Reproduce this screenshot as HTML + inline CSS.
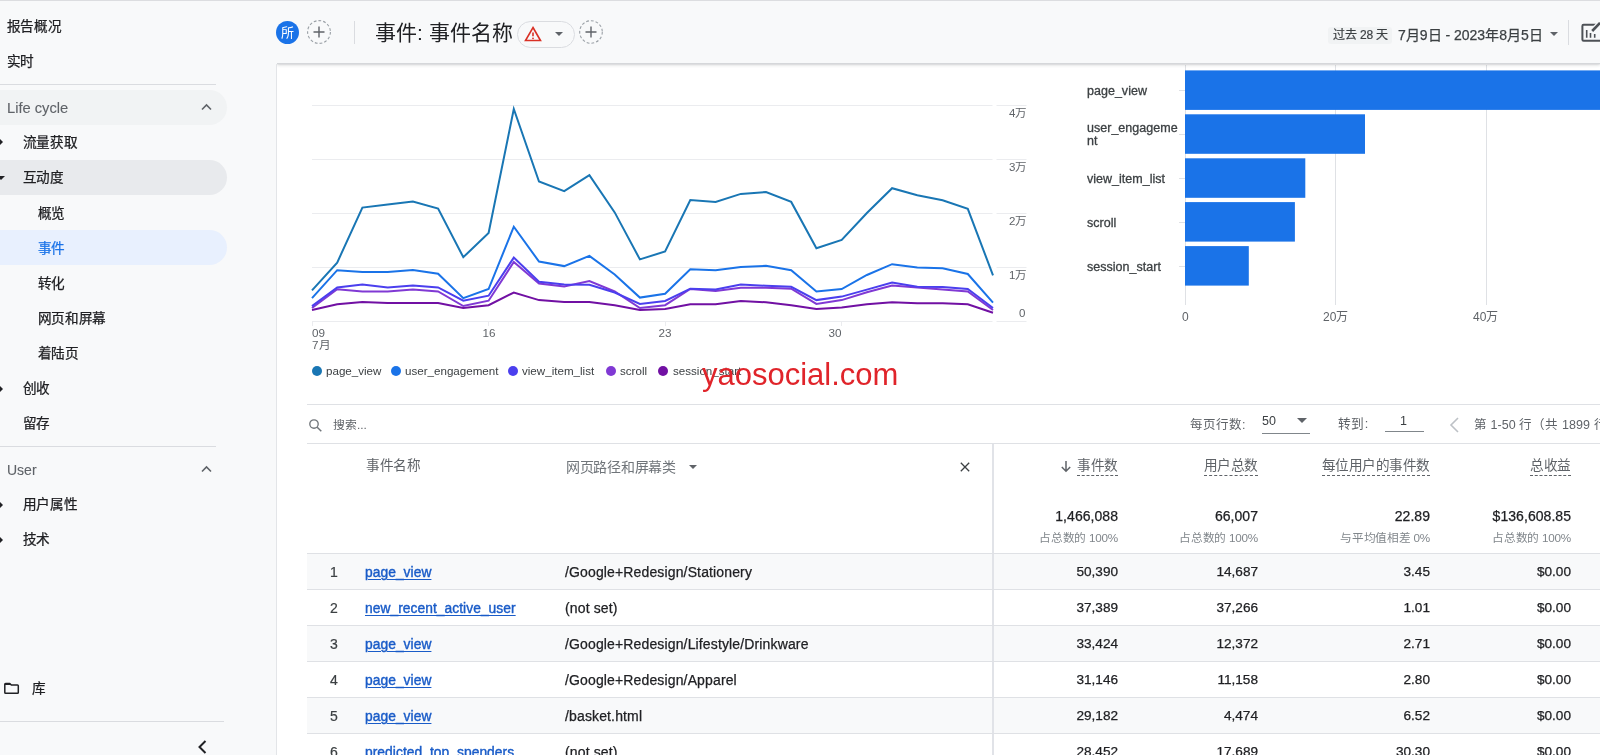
<!DOCTYPE html>
<html lang="zh-CN"><head><meta charset="utf-8">
<style>
*{box-sizing:border-box;margin:0;padding:0}
html,body{width:1600px;height:755px;overflow:hidden;background:#f8f9fa;font-family:"Liberation Sans",sans-serif;color:#202124}
.abs{position:absolute}
#root{position:relative;width:1600px;height:755px;overflow:hidden;background:transparent;will-change:transform}
#topline{left:0;top:0;width:1600px;height:1px;background:#dcdde0}
#side{left:0;top:0;width:276px;height:755px;background:#f8f9fa}
#sideb{left:276px;top:64px;width:1px;height:691px;background:#e3e5e8}
.nav{position:absolute;left:0;height:35px;width:227px;border-radius:0 18px 18px 0;font-size:13.6px;font-weight:500;letter-spacing:-.3px;line-height:35px;color:#202124;white-space:nowrap}
.nav span{position:absolute;top:0;margin-left:-.5px;-webkit-text-stroke:.25px currentColor}
.sep{position:absolute;left:0;height:1px;background:#dadce0}
.tri{position:absolute;left:-4px;width:0;height:0}
#hdr{left:277px;top:2px;width:1323px;height:62px;background:#f8f9fa;border-bottom:1px solid #d5d7da;box-shadow:0 1px 3px rgba(60,64,67,.22);clip-path:inset(0 0 -8px 0)}
#card{left:277px;top:65px;width:1323px;height:690px;background:#fff}
.circ{position:absolute;width:23.4px;height:23.4px;border-radius:50%}
.t{position:absolute;white-space:nowrap;line-height:14px}
.r{text-align:right}
.bl{font-size:12.5px;color:#3c4043;line-height:14px;letter-spacing:.02px;-webkit-text-stroke:.3px #3c4043}
.row{position:absolute;left:307px;width:1293px;height:36px;border-top:1px solid #dfe1e5}
.row.odd{background:#f8f9fa}
.cell{position:absolute;top:0;line-height:36px;font-size:14px;color:#202124;white-space:nowrap;letter-spacing:.14px;-webkit-text-stroke:.25px #202124}
.cell.r,.cell.n{font-size:13.6px;letter-spacing:0}
.cell.n{-webkit-text-stroke:.2px #3c4043;color:#3c4043;font-size:14px}
a.lk{color:#1a5cc8;text-decoration:underline;text-underline-offset:1.5px;text-decoration-thickness:1px;font-size:13.8px;letter-spacing:.05px;-webkit-text-stroke:.4px #1a5cc8}
.hd{font-size:13.6px;color:#5f6368;letter-spacing:-.45px;font-weight:500}
.dash{border-bottom:1px dashed #5f6368;padding-bottom:2px}
.sub{font-size:11.7px;color:#80868b;letter-spacing:-.25px}
.tot{font-size:14px;color:#202124;letter-spacing:.05px;-webkit-text-stroke:.25px #202124}
</style></head><body><div id="root">

<!-- SIDEBAR -->
<div id="side" class="abs">
 <div class="nav" style="top:9px"><span style="left:7px">报告概况</span></div>
 <div class="nav" style="top:44px"><span style="left:7px">实时</span></div>
 <div class="sep" style="top:84px;width:216px"></div>
 <div class="nav" style="top:90px;background:#f1f3f4;color:#5f6368"><span style="left:7.5px;top:1px;font-size:14.7px;letter-spacing:0;-webkit-text-stroke:.1px">Life cycle</span>
  <svg class="abs" style="left:200px;top:12px" width="13" height="10" viewBox="0 0 13 10"><path d="M2 7.5 L6.5 3 L11 7.5" fill="none" stroke="#5f6368" stroke-width="1.6"/></svg></div>
 <div class="nav" style="top:125px"><span style="left:23px">流量获取</span></div>
 <div class="nav" style="top:160px;background:#e8eaed"><span style="left:23px">互动度</span></div>
 <div class="nav" style="top:195px"><span style="left:38px;top:1px">概览</span></div>
 <div class="nav" style="top:230px;background:#e8f0fe;color:#1a73e8"><span style="left:38px;top:1px">事件</span></div>
 <div class="nav" style="top:265px"><span style="left:38px;top:1px">转化</span></div>
 <div class="nav" style="top:300px"><span style="left:38px;top:1px">网页和屏幕</span></div>
 <div class="nav" style="top:335px"><span style="left:38px;top:1px">着陆页</span></div>
 <div class="nav" style="top:371px"><span style="left:23px">创收</span></div>
 <div class="nav" style="top:406px"><span style="left:23px">留存</span></div>
 <div class="sep" style="top:446px;width:216px"></div>
 <div class="nav" style="top:451px;color:#5f6368"><span style="left:7.5px;top:2px;font-size:14px;letter-spacing:0;-webkit-text-stroke:.1px">User</span>
  <svg class="abs" style="left:200px;top:13px" width="13" height="10" viewBox="0 0 13 10"><path d="M2 7.5 L6.5 3 L11 7.5" fill="none" stroke="#5f6368" stroke-width="1.6"/></svg></div>
 <div class="nav" style="top:487px"><span style="left:23px">用户属性</span></div>
 <div class="nav" style="top:522px"><span style="left:23px">技术</span></div>
 <!-- arrows -->
 <div class="tri" style="top:139px;left:0;border-left:3.6px solid #202124;border-top:3px solid transparent;border-bottom:3px solid transparent"></div>
 <div class="tri" style="top:176px;left:-3px;border-top:4px solid #202124;border-left:4px solid transparent;border-right:4px solid transparent"></div>
 <div class="tri" style="top:386px;left:0;border-left:3.6px solid #202124;border-top:3px solid transparent;border-bottom:3px solid transparent"></div>
 <div class="tri" style="top:501.5px;left:0;border-left:3.6px solid #202124;border-top:3px solid transparent;border-bottom:3px solid transparent"></div>
 <div class="tri" style="top:536.5px;left:0;border-left:3.6px solid #202124;border-top:3px solid transparent;border-bottom:3px solid transparent"></div>
 <!-- library -->
 <svg class="abs" style="left:4px;top:681px" width="17" height="14" viewBox="0 0 17 14"><path d="M.8 3.2 Q.8 2.45 1.6 2.45 H5.8 L7.3 3.95 H13.5 Q14.3 3.95 14.3 4.75 V11.45 Q14.3 12.25 13.5 12.25 H1.6 Q.8 12.25 .8 11.45 Z" fill="none" stroke="#202124" stroke-width="1.5" stroke-linejoin="round"/><path d="M.8 2.45 H5.8 L7.3 3.95 H.8 Z" fill="#202124"/></svg>
 <div class="nav" style="top:671px"><span style="left:32px">库</span></div>
 <div class="sep" style="top:721px;width:224px"></div>
 <svg class="abs" style="left:196px;top:739px" width="12" height="16" viewBox="0 0 12 16"><path d="M9.5 2 L3.5 8 L9.5 14" fill="none" stroke="#202124" stroke-width="2"/></svg>
</div>

<div id="sideb" class="abs"></div>
<!-- CARD -->
<div id="card" class="abs"></div>

<!-- LINE CHART -->
<svg class="abs" style="left:0;top:0" width="1600" height="755" viewBox="0 0 1600 755">
 <g stroke="#ebecef" stroke-width="1">
  <line x1="312" x2="992.5" y1="105.5" y2="105.5"/><line x1="996.5" x2="1026.5" y1="105.5" y2="105.5"/><line x1="312" x2="992.5" y1="159.5" y2="159.5"/><line x1="996.5" x2="1026.5" y1="159.5" y2="159.5"/>
  <line x1="312" x2="992.5" y1="213.5" y2="213.5"/><line x1="996.5" x2="1026.5" y1="213.5" y2="213.5"/><line x1="312" x2="992.5" y1="267.5" y2="267.5"/><line x1="996.5" x2="1026.5" y1="267.5" y2="267.5"/>
  <line x1="312" x2="992.5" y1="321.5" y2="321.5"/><line x1="996.5" x2="1026.5" y1="321.5" y2="321.5"/>
  <line x1="312.5" x2="312.5" y1="321" y2="326"/><line x1="488.5" x2="488.5" y1="321" y2="326"/><line x1="665.5" x2="665.5" y1="321" y2="326"/><line x1="841.5" x2="841.5" y1="321" y2="326"/>
 </g>
 <!-- bar chart grid -->
 <g stroke="#dfe1e5" stroke-width="1">
  <line x1="1185.5" x2="1185.5" y1="65" y2="305"/><line x1="1335.5" x2="1335.5" y1="65" y2="305"/><line x1="1486.5" x2="1486.5" y1="65" y2="305"/>
  <line x1="1179" x2="1185" y1="90.5" y2="90.5"/><line x1="1179" x2="1185" y1="134.5" y2="134.5"/><line x1="1179" x2="1185" y1="178.5" y2="178.5"/><line x1="1179" x2="1185" y1="222.5" y2="222.5"/><line x1="1179" x2="1185" y1="266.5" y2="266.5"/>
 </g>
 <g fill="#1a73e8">
  <rect x="1185" y="70.4" width="415" height="39.5"/>
  <rect x="1185" y="114.3" width="180" height="39.5"/>
  <rect x="1185" y="158.3" width="120.3" height="39.5"/>
  <rect x="1185" y="202.1" width="109.9" height="39.5"/>
  <rect x="1185" y="246.1" width="63.8" height="39.5"/>
 </g>
 <polyline points="312.0,310.0 337.2,304.2 362.4,302.0 387.7,303.0 412.9,303.0 438.1,303.0 463.3,308.0 488.6,305.2 513.8,292.5 539.0,300.1 564.2,302.0 589.4,302.0 614.7,305.2 639.9,310.0 665.1,309.0 690.3,304.2 715.6,304.2 740.8,301.0 766.0,302.3 791.2,305.2 816.4,309.0 841.7,307.4 866.9,304.2 892.1,302.3 917.3,303.3 942.6,303.3 967.8,304.2 993.0,312.8" fill="none" stroke="#7110a3" stroke-width="2" stroke-linejoin="miter"/><polyline points="312.0,308.0 337.2,289.3 362.4,291.5 387.7,291.5 412.9,289.6 438.1,291.5 463.3,306.0 488.6,300.7 513.8,262.0 539.0,283.6 564.2,286.4 589.4,281.0 614.7,291.5 639.9,308.0 665.1,305.2 690.3,289.0 715.6,290.9 740.8,287.7 766.0,287.7 791.2,288.7 816.4,303.9 841.7,300.1 866.9,292.2 892.1,285.5 917.3,287.4 942.6,289.6 967.8,291.5 993.0,310.0" fill="none" stroke="#8039d4" stroke-width="2" stroke-linejoin="miter"/><polyline points="312.0,306.1 337.2,287.4 362.4,284.5 387.7,287.4 412.9,285.5 438.1,287.4 463.3,300.7 488.6,295.7 513.8,257.6 539.0,281.7 564.2,284.5 589.4,284.8 614.7,292.5 639.9,303.9 665.1,301.0 690.3,288.7 715.6,289.6 740.8,284.5 766.0,285.8 791.2,286.8 816.4,300.1 841.7,296.6 866.9,289.6 892.1,282.6 917.3,286.8 942.6,287.1 967.8,289.0 993.0,308.0" fill="none" stroke="#4b3fee" stroke-width="2" stroke-linejoin="miter"/><polyline points="312.0,298.2 337.2,270.2 362.4,272.1 387.7,272.1 412.9,269.9 438.1,273.7 463.3,298.2 488.6,289.0 513.8,226.7 539.0,261.6 564.2,266.1 589.4,255.9 614.7,274.4 639.9,297.6 665.1,293.7 690.3,269.3 715.6,270.2 740.8,267.0 766.0,265.8 791.2,270.2 816.4,291.5 841.7,289.0 866.9,275.0 892.1,264.2 917.3,267.4 942.6,268.3 967.8,274.0 993.0,302.6" fill="none" stroke="#1a73e8" stroke-width="2" stroke-linejoin="miter"/><polyline points="312.0,290.3 337.2,262.6 362.4,207.6 387.7,204.4 412.9,201.6 438.1,208.6 463.3,257.2 488.6,233.0 513.8,109.0 539.0,181.5 564.2,191.1 589.4,175.2 614.7,212.4 639.9,259.4 665.1,251.5 690.3,200.0 715.6,201.9 740.8,193.9 766.0,192.0 791.2,201.9 816.4,248.3 841.7,240.0 866.9,213.0 892.1,188.2 917.3,195.2 942.6,200.3 967.8,208.9 993.0,275.3" fill="none" stroke="#1976b4" stroke-width="2" stroke-linejoin="miter"/>
</svg>

<!-- chart labels -->
<div class="t" style="left:1008px;top:55px;font-size:12px;color:#9aa0a6;height:9px;overflow:hidden;line-height:12px"><span style="position:relative;top:-1px">5万</span></div>
<div class="t" style="left:1009px;top:106px;font-size:11.5px;color:#5f6368">4万</div>
<div class="t" style="left:1009px;top:160px;font-size:11.5px;color:#5f6368">3万</div>
<div class="t" style="left:1009px;top:214px;font-size:11.5px;color:#5f6368">2万</div>
<div class="t" style="left:1009px;top:268px;font-size:11.5px;color:#5f6368">1万</div>
<div class="t" style="left:1019px;top:306px;font-size:11.5px;color:#5f6368">0</div>
<div class="t" style="left:312px;top:326.7px;font-size:11.7px;color:#5f6368;line-height:12px">09<br>7月</div>
<div class="t" style="left:482.5px;top:326.7px;font-size:11.7px;color:#5f6368;line-height:12px">16</div>
<div class="t" style="left:658.5px;top:326.7px;font-size:11.7px;color:#5f6368;line-height:12px">23</div>
<div class="t" style="left:828.5px;top:326.7px;font-size:11.7px;color:#5f6368;line-height:12px">30</div>

<!-- legend -->
<div class="t" style="left:312px;top:364px;font-size:11.6px;color:#3c4043;line-height:14px">
 <span class="abs" style="left:0;top:2px;width:10px;height:10px;border-radius:50%;background:#1976b4"></span><span class="abs" style="left:14px">page_view</span>
 <span class="abs" style="left:79px;top:2px;width:10px;height:10px;border-radius:50%;background:#1a73e8"></span><span class="abs" style="left:93px">user_engagement</span>
 <span class="abs" style="left:196px;top:2px;width:10px;height:10px;border-radius:50%;background:#4b3fee"></span><span class="abs" style="left:210px">view_item_list</span>
 <span class="abs" style="left:294px;top:2px;width:10px;height:10px;border-radius:50%;background:#8039d4"></span><span class="abs" style="left:308px">scroll</span>
 <span class="abs" style="left:346px;top:2px;width:10px;height:10px;border-radius:50%;background:#7110a3"></span><span class="abs" style="left:361px">session_start</span>
</div>
<div class="t" style="left:702px;top:356px;font-size:31px;color:#e0242a;line-height:38px">yaosocial.com</div>

<!-- bar labels -->
<div class="t bl" style="left:1087px;top:83.8px">page_view</div>
<div class="t bl" style="left:1087px;top:121.6px;line-height:13.5px">user_engageme<br>nt</div>
<div class="t bl" style="left:1087px;top:171.8px">view_item_list</div>
<div class="t bl" style="left:1087px;top:215.8px">scroll</div>
<div class="t bl" style="left:1087px;top:259.8px">session_start</div>
<div class="t" style="left:1182px;top:310px;font-size:12px;color:#5f6368">0</div>
<div class="t" style="left:1323px;top:310px;font-size:12px;color:#5f6368">20万</div>
<div class="t" style="left:1473px;top:310px;font-size:12px;color:#5f6368">40万</div>

<!-- SEARCH ROW -->
<div class="abs" style="left:307px;top:404px;width:1293px;height:1px;background:#dfe1e5"></div>
<div class="abs" style="left:307px;top:443px;width:1293px;height:1px;background:#dfe1e5"></div>
<svg class="abs" style="left:308px;top:418px" width="15" height="15" viewBox="0 0 15 15"><circle cx="6" cy="6" r="4.2" fill="none" stroke="#70757a" stroke-width="1.35"/><path d="M9.2 9.2 L13.3 13.3" stroke="#70757a" stroke-width="1.5"/></svg>
<div class="t" style="left:333px;top:417.5px;font-size:11.8px;color:#5f6368">搜索...</div>
<div class="t" style="left:1190px;top:417.5px;font-size:12.5px;color:#5f6368">每页行数:</div>
<div class="t" style="left:1262px;top:414px;font-size:12.5px;color:#3c4043">50</div>
<div class="tri" style="left:1297px;top:418px;border-top:5px solid #5f6368;border-left:5px solid transparent;border-right:5px solid transparent"></div>
<div class="abs" style="left:1262px;top:433px;width:48px;height:1px;background:#80868b"></div>
<div class="t" style="left:1338px;top:417px;font-size:12.7px;letter-spacing:.4px;color:#5f6368">转到:</div>
<div class="t" style="left:1400px;top:414px;font-size:12.5px;color:#3c4043">1</div>
<div class="abs" style="left:1385px;top:431px;width:39px;height:1px;background:#80868b"></div>
<svg class="abs" style="left:1448px;top:416px" width="12" height="18" viewBox="0 0 12 18"><path d="M10 2 L3 9 L10 16" fill="none" stroke="#bdc1c6" stroke-width="1.6"/></svg>
<div class="t" style="left:1474px;top:417.5px;font-size:12.5px;color:#5f6368;letter-spacing:.05px">第 1-50 行（共 1899 行）</div>

<!-- TABLE HEADER -->
<div class="abs" style="left:992.2px;top:444px;width:1.8px;height:311px;background:#e1e3e8"></div>
<div class="t hd" style="left:366px;top:459px">事件名称</div>
<div class="t hd" style="left:566px;top:459.5px;font-size:14px;letter-spacing:-.3px;color:#70757a;font-weight:400">网页路径和屏幕类</div>
<div class="tri" style="left:689px;top:465px;border-top:4px solid #5f6368;border-left:4px solid transparent;border-right:4px solid transparent"></div>
<svg class="abs" style="left:959px;top:461px" width="12" height="12" viewBox="0 0 12 12"><path d="M1.8 1.8 L10.2 10.2 M10.2 1.8 L1.8 10.2" stroke="#3c4043" stroke-width="1.3"/></svg>
<svg class="abs" style="left:1060px;top:460px" width="12" height="13" viewBox="0 0 12 13"><path d="M6 1 V11 M1.8 7 L6 11.2 L10.2 7" fill="none" stroke="#5f6368" stroke-width="1.5"/></svg>
<div class="t hd r" style="right:482px;top:459px"><span class="dash">事件数</span></div>
<div class="t hd r" style="right:342px;top:459px"><span class="dash">用户总数</span></div>
<div class="t hd r" style="right:170px;top:459px"><span class="dash">每位用户的事件数</span></div>
<div class="t hd r" style="right:29px;top:459px"><span class="dash">总收益</span></div>

<div class="t tot r" style="right:482px;top:509px">1,466,088</div>
<div class="t tot r" style="right:342px;top:509px">66,007</div>
<div class="t tot r" style="right:170px;top:509px">22.89</div>
<div class="t tot r" style="right:29px;top:509px">$136,608.85</div>
<div class="t sub r" style="right:482px;top:531px">占总数的 100%</div>
<div class="t sub r" style="right:342px;top:531px">占总数的 100%</div>
<div class="t sub r" style="right:170px;top:531px">与平均值相差 0%</div>
<div class="t sub r" style="right:29px;top:531px">占总数的 100%</div>

<div class="row odd" style="top:553px"><div class="cell n" style="left:0;width:54px;text-align:center">1</div><div class="cell" style="left:58px"><a class="lk">page_view</a></div><div class="cell" style="left:258px">/Google+Redesign/Stationery</div><div class="cell r" style="right:482px">50,390</div><div class="cell r" style="right:342px">14,687</div><div class="cell r" style="right:170px">3.45</div><div class="cell r" style="right:29px">$0.00</div><div style="position:absolute;left:685.2px;top:0;width:1.8px;height:36px;background:#e1e3e8"></div></div>
<div class="row" style="top:589px"><div class="cell n" style="left:0;width:54px;text-align:center">2</div><div class="cell" style="left:58px"><a class="lk">new_recent_active_user</a></div><div class="cell" style="left:258px">(not set)</div><div class="cell r" style="right:482px">37,389</div><div class="cell r" style="right:342px">37,266</div><div class="cell r" style="right:170px">1.01</div><div class="cell r" style="right:29px">$0.00</div><div style="position:absolute;left:685.2px;top:0;width:1.8px;height:36px;background:#e1e3e8"></div></div>
<div class="row odd" style="top:625px"><div class="cell n" style="left:0;width:54px;text-align:center">3</div><div class="cell" style="left:58px"><a class="lk">page_view</a></div><div class="cell" style="left:258px">/Google+Redesign/Lifestyle/Drinkware</div><div class="cell r" style="right:482px">33,424</div><div class="cell r" style="right:342px">12,372</div><div class="cell r" style="right:170px">2.71</div><div class="cell r" style="right:29px">$0.00</div><div style="position:absolute;left:685.2px;top:0;width:1.8px;height:36px;background:#e1e3e8"></div></div>
<div class="row" style="top:661px"><div class="cell n" style="left:0;width:54px;text-align:center">4</div><div class="cell" style="left:58px"><a class="lk">page_view</a></div><div class="cell" style="left:258px">/Google+Redesign/Apparel</div><div class="cell r" style="right:482px">31,146</div><div class="cell r" style="right:342px">11,158</div><div class="cell r" style="right:170px">2.80</div><div class="cell r" style="right:29px">$0.00</div><div style="position:absolute;left:685.2px;top:0;width:1.8px;height:36px;background:#e1e3e8"></div></div>
<div class="row odd" style="top:697px"><div class="cell n" style="left:0;width:54px;text-align:center">5</div><div class="cell" style="left:58px"><a class="lk">page_view</a></div><div class="cell" style="left:258px">/basket.html</div><div class="cell r" style="right:482px">29,182</div><div class="cell r" style="right:342px">4,474</div><div class="cell r" style="right:170px">6.52</div><div class="cell r" style="right:29px">$0.00</div><div style="position:absolute;left:685.2px;top:0;width:1.8px;height:36px;background:#e1e3e8"></div></div>
<div class="row" style="top:733px"><div class="cell n" style="left:0;width:54px;text-align:center">6</div><div class="cell" style="left:58px"><a class="lk">predicted_top_spenders</a></div><div class="cell" style="left:258px">(not set)</div><div class="cell r" style="right:482px">28,452</div><div class="cell r" style="right:342px">17,689</div><div class="cell r" style="right:170px">30.30</div><div class="cell r" style="right:29px">$0.00</div><div style="position:absolute;left:685.2px;top:0;width:1.8px;height:36px;background:#e1e3e8"></div></div>


<!-- HEADER BAR (on top for shadow) -->
<div id="hdr" class="abs">
</div>
<div class="circ" style="left:276px;top:20.6px;background:#1a73e8;color:#fff;font-size:13px;font-weight:500;line-height:23.4px;text-align:center">所</div>
<svg class="abs" style="left:306px;top:19.3px" width="26" height="26" viewBox="0 0 26 26"><circle cx="13" cy="13" r="11.4" fill="none" stroke="#9aa0a6" stroke-width="1.1" stroke-dasharray="2.8 2"/><path d="M13 7.5 V18.5 M7.5 13 H18.5" stroke="#5f6368" stroke-width="1.4"/></svg>
<div class="abs" style="left:354px;top:21px;width:1px;height:23px;background:#dadce0"></div>
<div class="t" style="left:375px;top:18px;font-size:21px;line-height:30px;color:#202124">事件: 事件名称</div>
<div class="abs" style="left:517px;top:20.5px;width:58px;height:27px;border:1.2px solid #dadce0;border-radius:14px"></div>
<svg class="abs" style="left:523.4px;top:25.3px" width="20" height="18" viewBox="0 0 20 18"><path d="M10 2.5 L17.5 15.5 H2.5 Z" fill="none" stroke="#d93025" stroke-width="1.6" stroke-linejoin="miter"/><path d="M10 7.5 V11.3" stroke="#d93025" stroke-width="1.6"/><circle cx="10" cy="13.3" r="0.9" fill="#d93025"/></svg>
<div class="tri" style="left:555px;top:32.4px;border-top:4px solid #5f6368;border-left:4px solid transparent;border-right:4px solid transparent"></div>
<svg class="abs" style="left:578px;top:19.3px" width="26" height="26" viewBox="0 0 26 26"><circle cx="13" cy="13" r="11.3" fill="none" stroke="#9aa0a6" stroke-width="1.1" stroke-dasharray="2.8 2"/><path d="M13 7.5 V18.5 M7.5 13 H18.5" stroke="#5f6368" stroke-width="1.4"/></svg>

<div class="abs" style="left:1328px;top:27px;width:64px;height:16.5px;background:#f1f3f4;border-radius:3px"></div>
<div class="t" style="left:1333px;top:27.3px;font-size:12px;line-height:16px;color:#3c4043;letter-spacing:-.1px;font-weight:500;-webkit-text-stroke:.2px #3c4043">过去 28 天</div>
<div class="t" style="left:1398px;top:25.3px;font-size:14px;line-height:20px;color:#3c4043;letter-spacing:0;font-weight:500;-webkit-text-stroke:.25px #3c4043">7月9日 - 2023年8月5日</div>
<div class="tri" style="left:1549.6px;top:31.8px;border-top:4.4px solid #5f6368;border-left:4.2px solid transparent;border-right:4.2px solid transparent"></div>
<div class="abs" style="left:1568px;top:20px;width:1px;height:25px;background:#dadce0"></div>
<svg class="abs" style="left:1578px;top:19px" width="22" height="26" viewBox="0 0 22 26"><path d="M18 5.8 H5.6 Q4.4 5.8 4.4 7 V20.6 Q4.4 21.8 5.6 21.8 H22" fill="none" stroke="#4d5156" stroke-width="2"/><path d="M8.7 18.8 V11.1 M12.5 18.8 V14 M16.7 18.8 V15" stroke="#4d5156" stroke-width="1.6"/><path d="M13.2 13 L22 3.8" stroke="#f8f9fa" stroke-width="5"/><path d="M14.2 12 L22 3.8" stroke="#4d5156" stroke-width="2.6"/></svg>
<div id="topline" class="abs"></div>
</div></body></html>
